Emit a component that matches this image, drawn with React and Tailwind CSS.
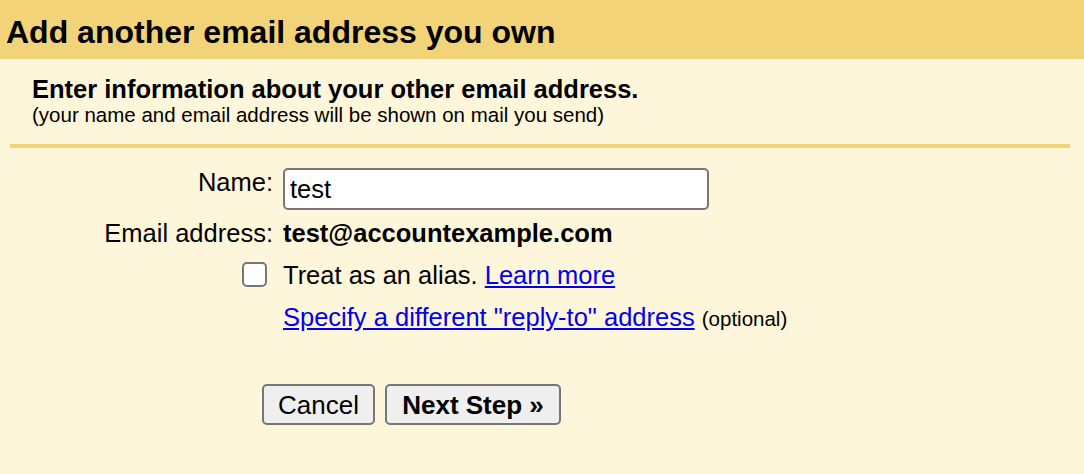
export default function App() {
  const font = { fontFamily: '"Liberation Sans", Arial, Helvetica, sans-serif' };
  return (
    <div
      className="w-[1084px] h-[474px] bg-[#fef6da] text-black overflow-hidden font-['Liberation_Sans',Arial,sans-serif]"
      style={font}
    >
      <div className="h-[59px] bg-[#f3d377] pl-[6px] pt-[14px]">
        <h1 className="text-[32px] leading-[36px] font-bold">Add another email address you own</h1>
      </div>

      <div className="pl-[32px] pt-[16px]">
        <div className="text-[25.5px] leading-[28px] font-bold">
          Enter information about your other email address.
        </div>
        <div className="text-[20.5px] leading-[23px]">
          (your name and email address will be shown on mail you send)
        </div>
      </div>

      <div className="ml-[10px] mr-[14px] mt-[18px] h-[4px] bg-[#f3d377]" />

      <div className="grid grid-cols-[273px_1fr] gap-x-[10px] mt-[20px] text-[25.5px] leading-[28px]">
        <div className="text-right">Name:</div>
        <div>
          <input
            type="text"
            defaultValue="test"
            className="w-[426px] h-[42px] border-2 border-[#767676] rounded-[5px] bg-white px-[5px] text-[25.5px] text-black outline-none"
            style={font}
          />
        </div>

        <div className="text-right mt-[9px]">Email address:</div>
        <div className="mt-[9px] font-bold">test@accountexample.com</div>

        <div className="flex justify-end items-start mt-[14px] pr-[6px]">
          <span className="mt-[1px] w-[25px] h-[25px] border-2 border-[#767676] rounded-[5px] bg-white" />
        </div>
        <div className="mt-[14px]">
          Treat as an alias.{" "}
          <a href="#" className="text-[#0000ee] underline">Learn more</a>
        </div>

        <div className="mt-[14px]" />
        <div className="mt-[14px]">
          <a href="#" className="text-[#0000ee] underline">Specify a different "reply-to" address</a>{" "}
          <span className="text-[20.5px]">(optional)</span>
        </div>
      </div>

      <div className="flex gap-[10px] ml-[262px] mt-[51px]">
        <button
          className="w-[113px] h-[41px] border-2 border-[#767676] rounded-[5px] bg-[#efefef] text-[26px] text-black"
          style={font}
        >
          Cancel
        </button>
        <button
          className="w-[176px] h-[41px] border-2 border-[#767676] rounded-[5px] bg-[#efefef] text-[26px] font-bold text-black"
          style={font}
        >
          Next Step »
        </button>
      </div>
    </div>
  );
}
